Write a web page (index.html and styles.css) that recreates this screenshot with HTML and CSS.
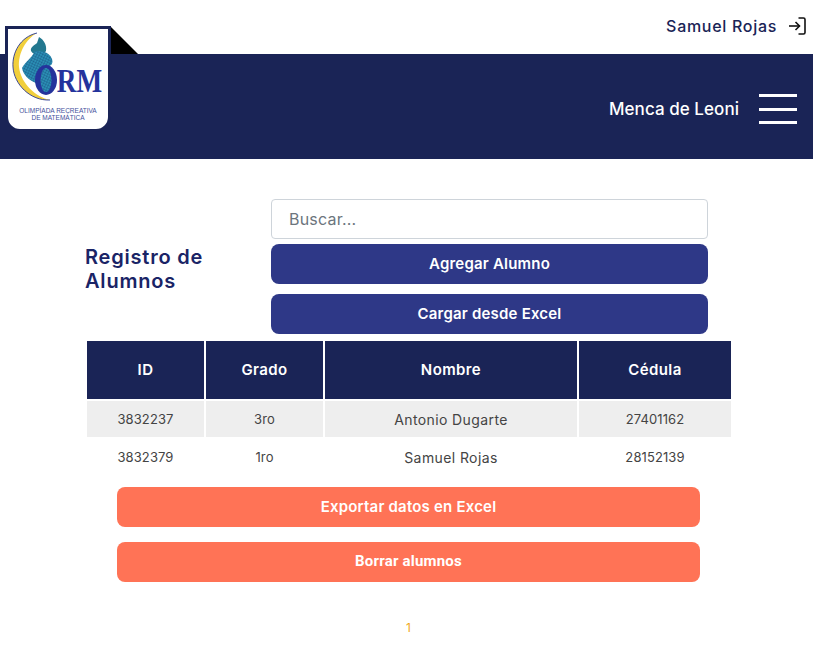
FILE: index.html
```html
<!DOCTYPE html>
<html lang="es">
<head>
    <meta charset="UTF-8">
    <meta name="viewport" content="width=device-width, initial-scale=1.0">
    <title>Registro de Alumnos</title>
    <link rel="stylesheet" href="styles.css">
</head>
<body>
    <div class="top_bar">
        <span class="user_name">Samuel Rojas</span>
        <svg class="logout_icon" width="18" height="18" viewBox="0 0 18 18" fill="none" stroke="#111" stroke-width="1.6">
            <path d="M10.5 1H15.5Q17 1 17 2.5V15.5Q17 17 15.5 17H10.5"/>
            <path d="M1 9H11.5"/>
            <path d="M7.5 5L11.5 9L7.5 13"/>
        </svg>
    </div>

    <header class="header">
        <span class="school_name">Menca de Leoni</span>
        <div class="burger">
            <span></span>
            <span></span>
            <span></span>
        </div>
    </header>

    <!-- logo encima del header -->
    <div class="logo_fold"></div>
    <div class="logo">
        <svg width="100" height="100" viewBox="0 0 100 100">
            <defs>
                <pattern id="net" width="2.6" height="2.6" patternUnits="userSpaceOnUse" patternTransform="rotate(25)">
                    <rect width="2.6" height="2.6" fill="#2b8fb5"/>
                    <path d="M0 0H2.6M0 0V2.6" stroke="#15507e" stroke-width="0.7"/>
                </pattern>
            </defs>
            <path d="M29 4C12 8 4 24 5 38C6 55 22 72 42 71C28 68 13 55 11 38C10 24 18 10 29 4Z" fill="#f1cf3c"/>
            <path d="M29 4C12 8 4 24 5 38C6 55 22 72 42 71" fill="none" stroke="#2a3a96" stroke-width="0.9"/>
            <path d="M31 8C36 11 39 16 38 22C35 27 26 27 23 22C22 18 27 16 29 14Z" fill="#23788f"/>
            <path d="M27 22C33 22 41 22 44 30C46 36 41 38 37 38C31 41 28 48 28 54C22 52 15 46 14 39C17 33 23 30 27 22Z" fill="url(#net)"/>
            <ellipse cx="38" cy="51" rx="11" ry="15" fill="#25339c"/>
            <ellipse cx="38" cy="51" rx="5.5" ry="12" fill="url(#net)"/>
            <text class="logo_orm" x="61" y="63" transform="scale(0.8 1)">RM</text>
            <text class="logo_small" x="50" y="84" text-anchor="middle">OLIMPÍADA RECREATIVA</text>
            <text class="logo_small" x="50" y="91" text-anchor="middle">DE MATEMÁTICA</text>
        </svg>
    </div>

    <main class="content">
        <section class="tools">
            <h1 class="page_title">Registro de Alumnos</h1>
            <div class="tools_box">
                <input class="search" type="text" placeholder="Buscar...">
                <button class="btn btn_blue btn_add">Agregar Alumno</button>
                <button class="btn btn_blue">Cargar desde Excel</button>
            </div>
        </section>

        <table class="students">
            <thead>
                <tr>
                    <th class="col_id">ID</th>
                    <th class="col_grade">Grado</th>
                    <th class="col_name">Nombre</th>
                    <th class="col_doc">Cédula</th>
                </tr>
            </thead>
            <tbody>
                <tr class="shaded">
                    <td>3832237</td>
                    <td>3ro</td>
                    <td class="td_name">Antonio Dugarte</td>
                    <td>27401162</td>
                </tr>
                <tr>
                    <td>3832379</td>
                    <td>1ro</td>
                    <td class="td_name">Samuel Rojas</td>
                    <td>28152139</td>
                </tr>
            </tbody>
        </table>

        <div class="actions">
            <button class="btn btn_orange">Exportar datos en Excel</button>
            <button class="btn btn_orange btn_roboto">Borrar alumnos</button>
        </div>

        <div class="pagination">1</div>
    </main>
</body>
</html>
```

FILE: styles.css
```css
* {
    margin: 0;
    padding: 0;
    box-sizing: border-box;
}

body {
    font-family: "Inter", "Liberation Sans", sans-serif;
    background-color: #fff;
    position: relative;
}

.top_bar {
    height: 54px;
    display: flex;
    justify-content: flex-end;
    align-items: center;
    padding: 0 7px 2px 0;
    gap: 11px;
}

.user_name {
    font-size: 16px;
    font-weight: 500;
    color: #1a2456;
    letter-spacing: 0.7px;
}

.header {
    height: 105px;
    background-color: #1a2456;
    display: flex;
    justify-content: flex-end;
    align-items: flex-start;
    padding: 40px 16px 0 0;
}

.school_name {
    font-size: 17px;
    font-weight: 500;
    color: #fff;
    margin: 5px 20px 0 0;
    letter-spacing: 0.05px;
}

.burger {
    width: 38px;
    height: 30px;
    display: flex;
    flex-direction: column;
    justify-content: space-between;
}

.burger > span {
    height: 3px;
    background-color: #fff;
}

.logo {
    position: absolute;
    left: 5px;
    top: 26px;
    width: 106px;
    height: 106px;
    background-color: #fff;
    border: 3px solid #1a2456;
    border-radius: 0 0 15px 15px;
}

.logo_fold {
    position: absolute;
    left: 110px;
    top: 26px;
    width: 28px;
    height: 28px;
    background-color: #000;
    clip-path: polygon(0 0, 100% 100%, 0 100%);
}

.logo_orm {
    font-family: "Liberation Serif", serif;
    font-size: 34px;
    font-weight: 700;
    fill: #25339c;
}

.logo_small {
    font-family: "Liberation Sans", sans-serif;
    font-size: 6.5px;
    fill: #3f4f9c;
}

.content {
    padding-top: 40px;
}

.tools {
    display: flex;
    align-items: center;
    padding-left: 85px;
}

.page_title {
    width: 186px;
    font-size: 20px;
    font-weight: 600;
    line-height: 24px;
    color: #1a2466;
    padding: 5px 40px 0 0;
    letter-spacing: 0.8px;
}

.tools_box {
    width: 437px;
    display: flex;
    flex-direction: column;
}

.search {
    height: 40px;
    border: 1px solid #ced4da;
    border-radius: 4px;
    padding: 0 17px;
    font-family: inherit;
    font-size: 16px;
    letter-spacing: 0.2px;
}

.search::placeholder {
    color: #6c757d;
    opacity: 1;
}

.btn {
    display: block;
    height: 40px;
    border: none;
    border-radius: 8px;
    color: #fff;
    font-family: inherit;
    font-size: 15px;
    font-weight: 600;
    letter-spacing: 0.2px;
    padding-bottom: 2px;
    cursor: pointer;
}

.btn_blue {
    background-color: #2e3887;
}

.btn_add {
    margin: 5px 0 10px;
}

.students {
    width: 648px;
    margin: 5px 0 0 85px;
    border-collapse: separate;
    border-spacing: 2px;
    table-layout: fixed;
}

.col_id,
.col_grade {
    width: 117px;
}

.col_name {
    width: 252px;
}

.students th {
    height: 58px;
    padding-bottom: 2px;
    background-color: #1a2456;
    color: #fff;
    font-size: 15px;
    font-weight: 600;
    letter-spacing: 0.4px;
    text-align: center;
}

.students td {
    height: 36px;
    font-size: 13px;
    letter-spacing: 0.1px;
    color: #444;
    text-align: center;
}

.students .td_name {
    font-size: 14px;
    letter-spacing: 0.4px;
}

.shaded td {
    background-color: #eee;
}

.actions {
    width: 583px;
    margin: 10px 0 0 117px;
    display: flex;
    flex-direction: column;
    gap: 15px;
}

.btn_orange {
    background-color: #ff7356;
}

.btn_roboto {
    font-family: "Roboto", sans-serif;
    font-weight: 700;
}

.pagination {
    margin-top: 38px;
    text-align: center;
    font-size: 12px;
    color: #f0a818;
    padding-left: 4px;
}
```
